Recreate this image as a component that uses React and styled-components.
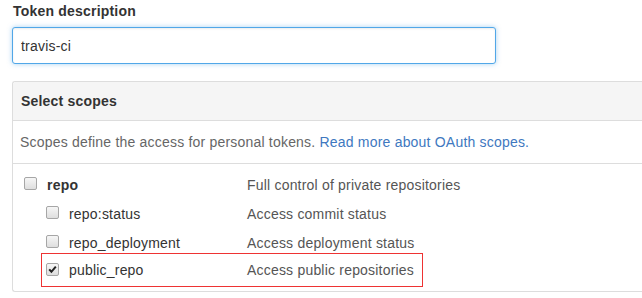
import styled, { createGlobalStyle } from "styled-components";

const GlobalStyle = createGlobalStyle`
  body {
    margin: 0;
    background: #fff;
    color: #333;
    font-family: "Liberation Sans", Arial, sans-serif;
    font-size: 14px;
    letter-spacing: 0.2px;
    overflow: hidden;
  }
`;

const SCOPES = [
  { name: "repo", description: "Full control of private repositories", main: true },
  { name: "repo:status", description: "Access commit status" },
  { name: "repo_deployment", description: "Access deployment status" },
  { name: "public_repo", description: "Access public repositories", checked: true, highlight: true },
];

function Checkbox({ checked }) {
  return (
    <Box>
      {checked && (
        <svg width="11" height="11" viewBox="0 0 11 11">
          <path d="M2.2 5.4 L4.4 7.8 L8.8 2.6" fill="none" stroke="#222" strokeWidth="2" />
        </svg>
      )}
    </Box>
  );
}

function App() {
  return (
    <>
      <GlobalStyle />
      <Page>
        <Label>Token description</Label>
        <TextInput defaultValue="travis-ci" />

        <Panel>
          <PanelHeader>Select scopes</PanelHeader>
          <Note>
            Scopes define the access for personal tokens.{" "}
            <a href="#">Read more about OAuth scopes.</a>
          </Note>
          <ScopeList>
            {SCOPES.map((scope) => (
              <Row key={scope.name} $highlight={scope.highlight}>
                <NameCell $main={scope.main} $highlight={scope.highlight}>
                  <Checkbox checked={scope.checked} />
                  <ScopeName $main={scope.main}>{scope.name}</ScopeName>
                </NameCell>
                <Description>{scope.description}</Description>
              </Row>
            ))}
          </ScopeList>
        </Panel>
      </Page>
    </>
  );
}

const Page = styled.div`
  padding: 3px 0 0 12px;
`;

const Label = styled.div`
  font-weight: bold;
  line-height: 17px;
  padding-left: 1px;
  margin-bottom: 7px;
`;

const TextInput = styled.input`
  display: block;
  box-sizing: border-box;
  width: 484px;
  height: 37px;
  margin: 0;
  padding: 0 8px;
  border: 1px solid #51a7e8;
  border-radius: 3px;
  outline: none;
  font-family: inherit;
  font-size: 14px;
  letter-spacing: 0.2px;
  color: #333;
  box-shadow: inset 0 1px 2px rgba(0, 0, 0, 0.075), 0 0 5px rgba(81, 167, 232, 0.5);
`;

const Panel = styled.div`
  margin-top: 17px;
  border: 1px solid #ddd;
  border-right: none;
  border-radius: 3px 0 0 3px;
`;

const PanelHeader = styled.div`
  height: 38px;
  line-height: 38px;
  padding-left: 8px;
  background: #f5f5f5;
  border-bottom: 1px solid #ddd;
  border-radius: 3px 0 0 0;
  font-weight: bold;
  color: #333;
`;

const Note = styled.div`
  height: 42px;
  line-height: 43px;
  padding-left: 7px;
  border-bottom: 1px solid #ddd;
  color: #666;

  a {
    color: #4078c0;
    text-decoration: none;
  }
`;

const ScopeList = styled.div`
  padding: 6px 0 4px;
`;

const Row = styled.div`
  display: grid;
  grid-template-columns: ${({ $highlight }) => ($highlight ? "205px" : "234px")} 1fr;
  align-items: center;
  height: ${({ $highlight }) => ($highlight ? "34px" : "29px")};
  box-sizing: border-box;
  ${({ $highlight }) =>
    $highlight &&
    `
    width: 382px;
    margin: -4px 0 0 28px;
    border: 1px solid #ee3333;
  `}
`;

const NameCell = styled.div`
  display: flex;
  align-items: center;
  gap: 10px;
  padding-left: ${({ $main, $highlight }) => ($highlight ? "4px" : $main ? "11px" : "33px")};
`;

const Box = styled.span`
  display: inline-flex;
  align-items: center;
  justify-content: center;
  box-sizing: border-box;
  width: 13px;
  height: 13px;
  margin-top: -2px;
  border: 1px solid #a6a6a6;
  border-radius: 2px;
  background: linear-gradient(#f6f6f6, #dedede);
`;

const ScopeName = styled.span`
  font-weight: ${({ $main }) => ($main ? "bold" : "normal")};
  color: #333;
`;

const Description = styled.span`
  color: #555;
`;

export default App;
